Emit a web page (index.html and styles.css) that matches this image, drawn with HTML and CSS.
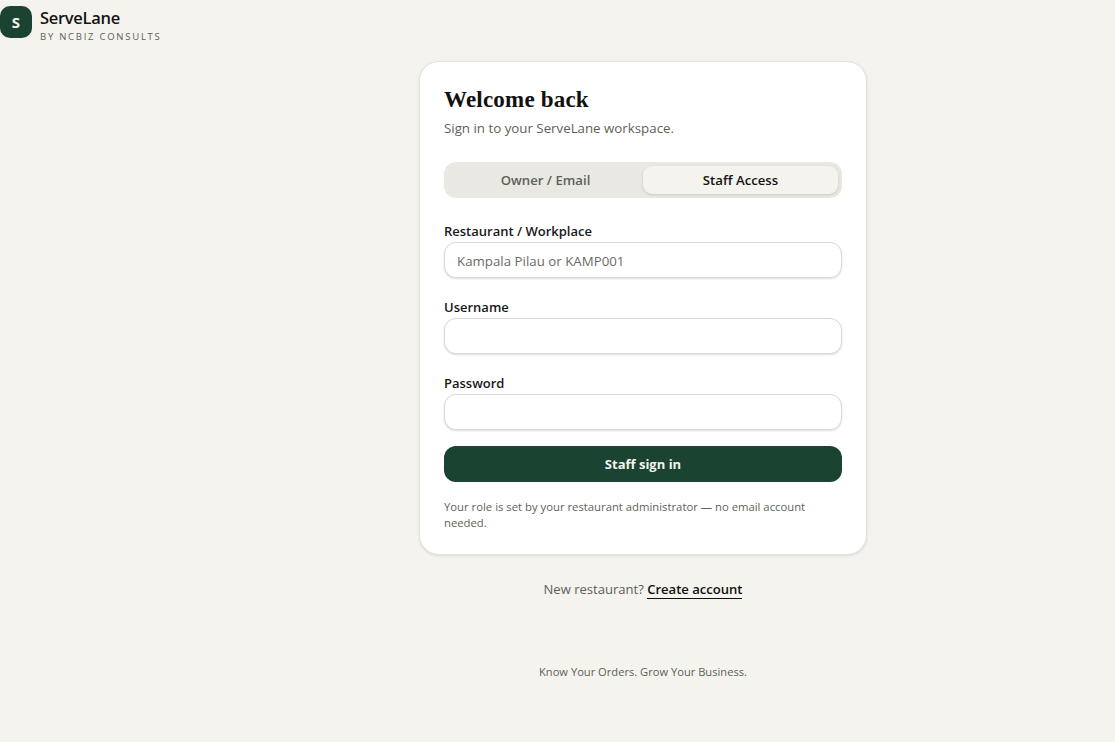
FILE: index.html
```html
<!DOCTYPE html>
<html lang="en">
<head>
    <meta charset="UTF-8">
    <meta name="viewport" content="width=device-width, initial-scale=1.0">
    <title>ServeLane - Sign in</title>
    <link rel="stylesheet" href="styles.css">
</head>
<body>
    <header class="brand">
        <div class="brand__mark">S</div>
        <div class="brand__text">
            <div class="brand__name">ServeLane</div>
            <div class="brand__by">BY NCBIZ CONSULTS</div>
        </div>
    </header>

    <main class="main">
        <section class="card">
            <h1>Welcome back</h1>
            <p class="card__sub">Sign in to your ServeLane workspace.</p>

            <div class="tabs">
                <button type="button" class="tabs__item">Owner / Email</button>
                <button type="button" class="tabs__item tabs__item--active">Staff Access</button>
            </div>

            <form class="form">
                <div class="field">
                    <label for="workplace">Restaurant / Workplace</label>
                    <input type="text" id="workplace" placeholder="Kampala Pilau or KAMP001">
                </div>
                <div class="field">
                    <label for="username">Username</label>
                    <input type="text" id="username">
                </div>
                <div class="field">
                    <label for="password">Password</label>
                    <input type="password" id="password">
                </div>
                <button type="submit" class="submit">Staff sign in</button>
            </form>

            <p class="note">Your role is set by your restaurant administrator — no email account needed.</p>
        </section>

        <p class="signup">New restaurant? <a href="#">Create account</a></p>
        <p class="tagline">Know Your Orders. Grow Your Business.</p>
    </main>
</body>
</html>
```

FILE: styles.css
```css
* {
    box-sizing: border-box;
}

body {
    margin: 0;
    min-height: 742px;
    background-color: #f4f3ee;
    color: #141414;
    font-family: "Open Sans", "Noto Sans", sans-serif;
}

/* Brand */
.brand {
    display: flex;
    align-items: flex-start;
    gap: 8px;
    height: 61px;
    padding-top: 6px;
}

.brand__mark {
    display: flex;
    align-items: center;
    justify-content: center;
    width: 32px;
    height: 32px;
    border-radius: 10px;
    background-color: #1a4331;
    color: #f4f3ee;
    font-size: 15px;
    font-weight: 700;
}

.brand__text {
    margin-top: 1px;
}

.brand__name {
    font-size: 16.5px;
    font-weight: 600;
    line-height: 21px;
    letter-spacing: -0.3px;
}

.brand__by {
    margin-top: 3px;
    font-size: 9.5px;
    line-height: 12px;
    letter-spacing: 1.75px;
    color: #5f5f5a;
}

/* Main column */
.main {
    width: 448px;
    margin-left: 419px;
}

.card {
    padding: 24px 24px 23px;
    background-color: #fff;
    border: 1px solid #e3e2dc;
    border-radius: 20px;
    box-shadow: 0 1px 3px rgba(0, 0, 0, 0.1);
}

h1 {
    margin: 0;
    font-family: "Liberation Serif", "DejaVu Serif", serif;
    font-size: 23px;
    font-weight: 700;
    line-height: 28px;
    letter-spacing: 0.2px;
    color: #111;
}

.card__sub {
    margin: 5px 0 0;
    font-size: 13.3px;
    line-height: 18px;
    color: #5f5f5a;
}

/* Tabs */
.tabs {
    display: grid;
    grid-template-columns: 1fr 1fr;
    height: 36px;
    margin-top: 25px;
    padding: 4px;
    background-color: #e9e8e3;
    border-radius: 12px;
}

.tabs__item {
    border: none;
    border-radius: 9px;
    background: none;
    font-family: inherit;
    font-size: 13.2px;
    font-weight: 600;
    color: #5f5f5a;
    padding: 0;
}

.tabs__item--active {
    background-color: #f4f3ee;
    color: #141414;
    box-shadow: 0 1px 3px rgba(0, 0, 0, 0.14);
}

/* Form */
.form {
    margin-top: 24px;
}

.field + .field {
    margin-top: 20px;
}

label {
    display: block;
    margin-bottom: 2px;
    font-size: 13px;
    font-weight: 600;
    line-height: 18px;
    color: #191919;
}

input {
    display: block;
    width: 100%;
    height: 36px;
    padding: 1px 12px 0;
    background-color: #fff;
    border: 1px solid #dbdad5;
    border-radius: 12px;
    box-shadow: 0 1px 2px rgba(0, 0, 0, 0.14);
    font-family: inherit;
    font-size: 13.3px;
    color: #141414;
}

input::placeholder {
    color: #6b6b66;
    opacity: 1;
}

.submit {
    display: block;
    width: 100%;
    height: 36px;
    margin-top: 16px;
    padding: 0;
    border: none;
    border-radius: 12px;
    background-color: #1a4331;
    color: #f4f3ee;
    font-family: inherit;
    font-size: 13px;
    font-weight: 700;
}

.note {
    margin: 17px 0 0;
    font-size: 11.3px;
    line-height: 16px;
    color: #5f5f5a;
}

/* Below the card */
.signup {
    margin: 24px 0 0;
    text-align: center;
    font-size: 13.05px;
    line-height: 20px;
    color: #5f5f5a;
}

.signup a {
    color: #111;
    font-weight: 600;
    text-decoration: none;
    border-bottom: 1px solid #111;
}

.tagline {
    margin: 65px 0 0;
    text-align: center;
    font-size: 11.15px;
    line-height: 16px;
    color: #5f5f5a;
}
```
